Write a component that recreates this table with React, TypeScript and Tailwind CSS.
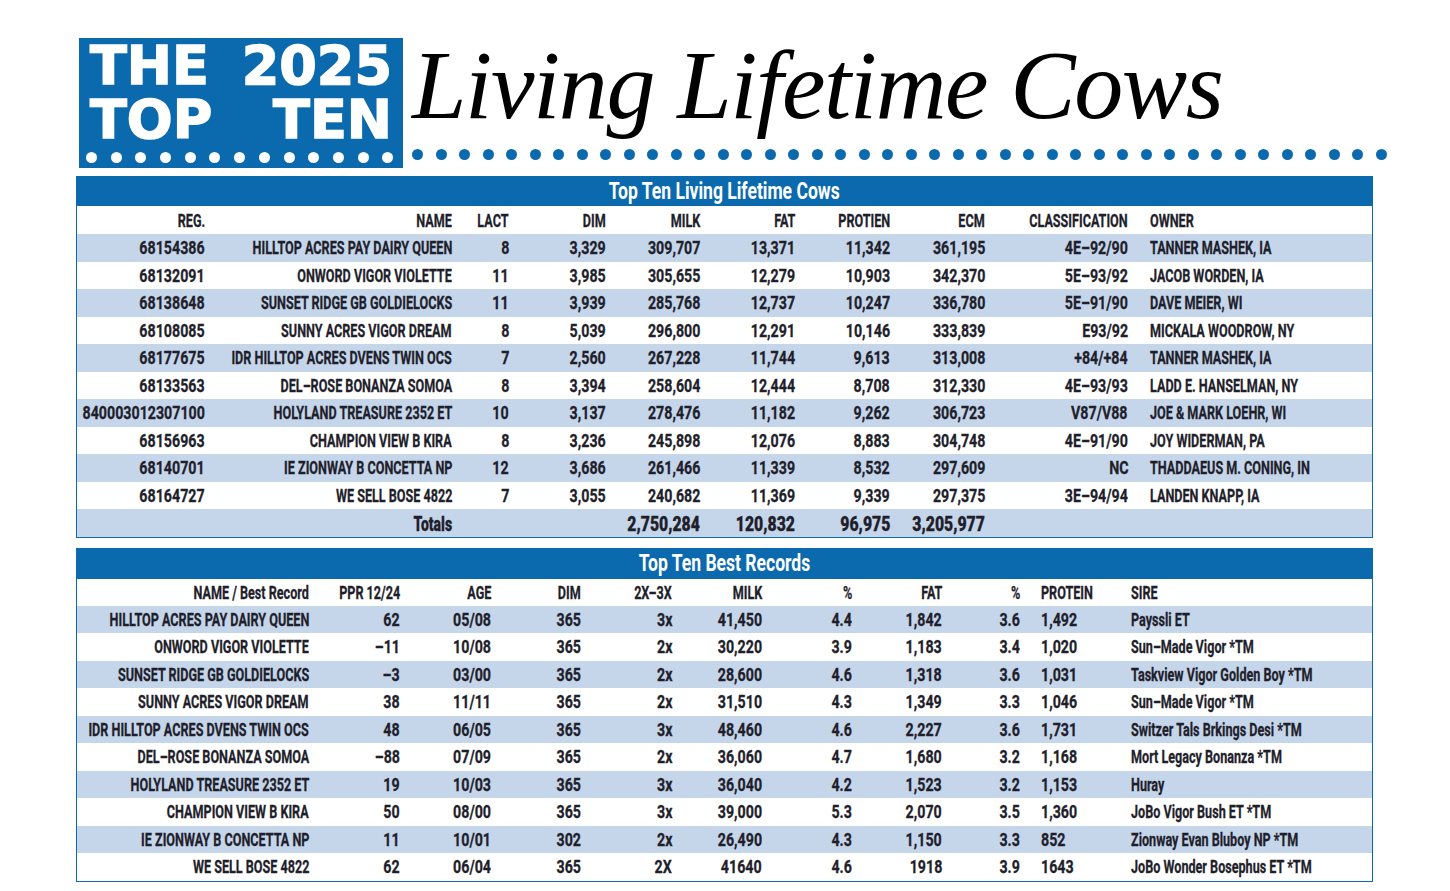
import React from 'react';
import clsx from 'clsx';

type Col = { align: 'r' | 'l'; kind: 'n' | 't'; pad?: string };

const lifetimeCols: Col[] = [
  { align: 'r', kind: 'n' },
  { align: 'r', kind: 't' },
  { align: 'r', kind: 'n' },
  { align: 'r', kind: 'n' },
  { align: 'r', kind: 'n' },
  { align: 'r', kind: 'n' },
  { align: 'r', kind: 'n' },
  { align: 'r', kind: 'n' },
  { align: 'r', kind: 'n' },
  { align: 'l', kind: 't', pad: 'pl-[22px]' },
];

const lifetimeHead = ['REG.', 'NAME', 'LACT', 'DIM', 'MILK', 'FAT', 'PROTIEN', 'ECM', 'CLASSIFICATION', 'OWNER'];

const lifetimeRows = [
  ['68154386', 'HILLTOP ACRES PAY DAIRY QUEEN', '8', '3,329', '309,707', '13,371', '11,342', '361,195', '4E–92/90', 'TANNER MASHEK, IA'],
  ['68132091', 'ONWORD VIGOR VIOLETTE', '11', '3,985', '305,655', '12,279', '10,903', '342,370', '5E–93/92', 'JACOB WORDEN, IA'],
  ['68138648', 'SUNSET RIDGE GB GOLDIELOCKS', '11', '3,939', '285,768', '12,737', '10,247', '336,780', '5E–91/90', 'DAVE MEIER, WI'],
  ['68108085', 'SUNNY ACRES VIGOR DREAM', '8', '5,039', '296,800', '12,291', '10,146', '333,839', 'E93/92', 'MICKALA WOODROW, NY'],
  ['68177675', 'IDR HILLTOP ACRES DVENS TWIN OCS', '7', '2,560', '267,228', '11,744', '9,613', '313,008', '+84/+84', 'TANNER MASHEK, IA'],
  ['68133563', 'DEL–ROSE BONANZA SOMOA', '8', '3,394', '258,604', '12,444', '8,708', '312,330', '4E–93/93', 'LADD E. HANSELMAN, NY'],
  ['840003012307100', 'HOLYLAND TREASURE 2352 ET', '10', '3,137', '278,476', '11,182', '9,262', '306,723', 'V87/V88', 'JOE & MARK LOEHR, WI'],
  ['68156963', 'CHAMPION VIEW B KIRA', '8', '3,236', '245,898', '12,076', '8,883', '304,748', '4E–91/90', 'JOY WIDERMAN, PA'],
  ['68140701', 'IE ZIONWAY B CONCETTA NP', '12', '3,686', '261,466', '11,339', '8,532', '297,609', 'NC', 'THADDAEUS M. CONING, IN'],
  ['68164727', 'WE SELL BOSE 4822', '7', '3,055', '240,682', '11,369', '9,339', '297,375', '3E–94/94', 'LANDEN KNAPP, IA'],
];

const totals = ['', 'Totals', '', '', '2,750,284', '120,832', '96,975', '3,205,977', '', ''];

const recordCols: Col[] = [
  { align: 'r', kind: 't' },
  { align: 'r', kind: 'n' },
  { align: 'r', kind: 'n' },
  { align: 'r', kind: 'n' },
  { align: 'r', kind: 'n' },
  { align: 'r', kind: 'n' },
  { align: 'r', kind: 'n' },
  { align: 'r', kind: 'n' },
  { align: 'r', kind: 'n' },
  { align: 'l', kind: 'n', pad: 'pl-[21px]' },
  { align: 'l', kind: 't' },
];

const recordHead = ['NAME / Best Record', 'PPR 12/24', 'AGE', 'DIM', '2X–3X', 'MILK', '%', 'FAT', '%', 'PROTEIN', 'SIRE'];

const recordRows = [
  ['HILLTOP ACRES PAY DAIRY QUEEN', '62', '05/08', '365', '3x', '41,450', '4.4', '1,842', '3.6', '1,492', 'Payssli ET'],
  ['ONWORD VIGOR VIOLETTE', '–11', '10/08', '365', '2x', '30,220', '3.9', '1,183', '3.4', '1,020', 'Sun–Made Vigor *TM'],
  ['SUNSET RIDGE GB GOLDIELOCKS', '–3', '03/00', '365', '2x', '28,600', '4.6', '1,318', '3.6', '1,031', 'Taskview Vigor Golden Boy *TM'],
  ['SUNNY ACRES VIGOR DREAM', '38', '11/11', '365', '2x', '31,510', '4.3', '1,349', '3.3', '1,046', 'Sun–Made Vigor *TM'],
  ['IDR HILLTOP ACRES DVENS TWIN OCS', '48', '06/05', '365', '3x', '48,460', '4.6', '2,227', '3.6', '1,731', 'Switzer Tals Brkings Desi *TM'],
  ['DEL–ROSE BONANZA SOMOA', '–88', '07/09', '365', '2x', '36,060', '4.7', '1,680', '3.2', '1,168', 'Mort Legacy Bonanza *TM'],
  ['HOLYLAND TREASURE 2352 ET', '19', '10/03', '365', '3x', '36,040', '4.2', '1,523', '3.2', '1,153', 'Huray'],
  ['CHAMPION VIEW B KIRA', '50', '08/00', '365', '3x', '39,000', '5.3', '2,070', '3.5', '1,360', 'JoBo Vigor Bush ET *TM'],
  ['IE ZIONWAY B CONCETTA NP', '11', '10/01', '302', '2x', '26,490', '4.3', '1,150', '3.3', '852', 'Zionway Evan Bluboy NP *TM'],
  ['WE SELL BOSE 4822', '62', '06/04', '365', '2X', '41640', '4.6', '1918', '3.9', '1643', 'JoBo Wonder Bosephus ET *TM'],
];

const Cell = ({ col, text, header }: { col: Col; text: string; header?: boolean }) => (
  <div
    className={clsx(
      'flex items-center whitespace-nowrap',
      col.align === 'r' ? 'justify-end' : 'justify-start',
      col.pad,
    )}
  >
    <span
      className={clsx(
        'inline-block',
        col.align === 'r' ? 'origin-right' : 'origin-left',
        header || col.kind === 't' ? 'scale-x-[0.7]' : 'scale-x-[0.79]',
      )}
    >
      {text}
    </span>
  </div>
);

const Row = ({
  cells,
  cols,
  grid,
  shaded,
  header,
  bold,
  height,
}: {
  cells: string[];
  cols: Col[];
  grid: string;
  shaded?: boolean;
  header?: boolean;
  bold?: boolean;
  height: string;
}) => (
  <div
    className={clsx(
      'grid [-webkit-text-stroke:0.3px_#1f1f2c]',
      grid,
      height,
      shaded ? 'bg-[#c5d5ea]' : 'bg-white',
      bold ? 'text-[20px] font-black' : 'text-[18px] font-bold',
    )}
  >
    {cells.map((c, i) => (
      <Cell key={i} col={cols[i]} text={c} header={header} />
    ))}
  </div>
);

const TitleBar = ({ title, height }: { title: string; height: string }) => (
  <div className={clsx('flex items-center justify-center bg-[#0a6aad] text-white', height)}>
    <span className="inline-block scale-x-[0.73] text-[24px] font-bold">{title}</span>
  </div>
);

const Dots = ({ count, color, pitch }: { count: number; color: string; pitch: string }) => (
  <div className={clsx('flex', pitch)}>
    {Array.from({ length: count }).map((_, i) => (
      <span key={i} className={clsx('h-[11px] w-[11px] shrink-0 rounded-full', color)} />
    ))}
  </div>
);

const App: React.FC = () => {
  const lifeGrid = 'grid-cols-[128px_247px_57px_97px_94px_95px_95px_95px_143px_1fr]';
  const recGrid = 'grid-cols-[232px_91px_91px_90px_91px_90px_90px_90px_78px_111px_1fr]';

  return (
    <div className="min-h-[891px] w-[1450px] bg-white text-[#1f1f2c]" style={{ fontFamily: 'Roboto, "Liberation Sans", sans-serif' }}>
      {/* header */}
      <div className="flex h-[168px] items-end pl-[79px]">
        <div className="flex h-[130px] w-[324px] flex-col bg-[#0a6aad] px-[7px] pt-[1px] text-white">
          <div
            className="flex h-[54px] items-center justify-between px-[4px] text-[54px] font-bold leading-none [-webkit-text-stroke:1.5px_white]"
            style={{ fontFamily: '"DejaVu Sans", sans-serif' }}
          >
            <span>THE</span>
            <span>2025</span>
          </div>
          <div
            className="flex h-[54px] items-center justify-between px-[4px] text-[54px] font-bold leading-none [-webkit-text-stroke:1.5px_white]"
            style={{ fontFamily: '"DejaVu Sans", sans-serif' }}
          >
            <span>TOP</span>
            <span>TEN</span>
          </div>
          <div className="mt-[5px]">
            <Dots count={13} color="bg-white" pitch="gap-[13.7px]" />
          </div>
        </div>
        <div className="flex flex-col pb-[8px] pl-[9px]">
          <div
            className="mb-[-12px] h-[115px] pl-[0px] text-[98px] italic leading-none tracking-[-1.4px] text-black"
            style={{ fontFamily: '"Liberation Serif", serif' }}
          >
            <span className="relative top-[-10px]">Living Lifetime Cows</span>
          </div>
          <Dots count={42} color="bg-[#0a6aad]" pitch="gap-[12.5px]" />
        </div>
      </div>

      {/* table 1 */}
      <div className="ml-[76px] mt-[8px] w-[1297px] border border-t-0 border-[#0a6aad]">
        <TitleBar title="Top Ten Living Lifetime Cows" height="h-[30px]" />
        <Row cells={lifetimeHead} cols={lifetimeCols} grid={lifeGrid} header height="h-[28px]" />
        {lifetimeRows.map((r, i) => (
          <Row key={i} cells={r} cols={lifetimeCols} grid={lifeGrid} shaded={i % 2 === 0} height="h-[27.5px]" />
        ))}
        <Row cells={totals} cols={lifetimeCols} grid={lifeGrid} shaded bold height="h-[27.5px]" />
      </div>

      {/* table 2 */}
      <div className="ml-[76px] mt-[10px] w-[1297px] border border-t-0 border-[#0a6aad]">
        <TitleBar title="Top Ten Best Records" height="h-[31px]" />
        <Row cells={recordHead} cols={recordCols} grid={recGrid} header height="h-[27px]" />
        {recordRows.map((r, i) => (
          <Row key={i} cells={r} cols={recordCols} grid={recGrid} shaded={i % 2 === 0} height="h-[27.5px]" />
        ))}
      </div>
    </div>
  );
};

export default App;
